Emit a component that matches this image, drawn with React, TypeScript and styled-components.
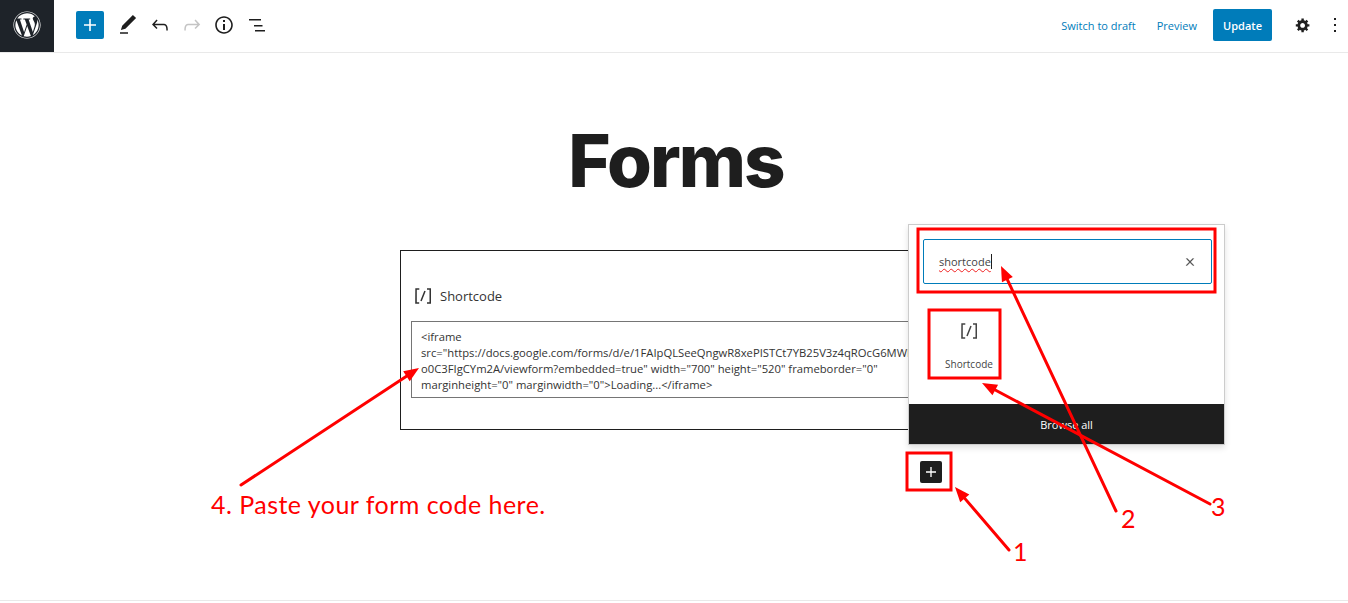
import React from "react";
import styled, { createGlobalStyle } from "styled-components";
import { FaWordpress } from "react-icons/fa";

const Global = createGlobalStyle`
  html, body { margin: 0; padding: 0; background: #fff; }
  body { font-family: "Open Sans", "Noto Sans", sans-serif; color: #1e1e1e; overflow: hidden; }
  * { box-sizing: border-box; }
`;

const Page = styled.div`
  position: relative;
  width: 1348px;
  height: 603px;
  display: flex;
  flex-direction: column;
  overflow: hidden;
`;

const TopBar = styled.header`
  height: 53px;
  flex: none;
  display: flex;
  align-items: center;
  padding-bottom: 2px;
  border-bottom: 1px solid #e9e9e9;
`;

const LogoTile = styled.div`
  width: 54px;
  height: 52px;
  align-self: flex-start;
  padding-bottom: 2px;
  background: #1e2329;
  color: #fff;
  display: flex;
  align-items: center;
  justify-content: center;
`;

const LeftTools = styled.div`
  display: flex;
  align-items: center;
  margin-left: 22px;
`;

const AddButton = styled.button`
  width: 28px;
  height: 28px;
  padding: 0;
  margin-right: 8px;
  border: 0;
  border-radius: 2px;
  background: #007cba;
  color: #fff;
  display: flex;
  align-items: center;
  justify-content: center;
`;

const ToolIcon = styled.span<{ $muted?: boolean; $wide?: boolean }>`
  width: ${(p) => (p.$wide ? 33 : 32)}px;
  height: 28px;
  display: flex;
  align-items: center;
  justify-content: ${(p) => (p.$wide ? "flex-start" : "center")};
  padding-left: ${(p) => (p.$wide ? 4 : 0)}px;
  color: ${(p) => (p.$muted ? "#c4c4c4" : "#1e1e1e")};
`;

const RightTools = styled.div`
  margin-left: auto;
  display: flex;
  align-items: center;
`;

const LinkText = styled.a<{ $gap: number }>`
  font-size: 11px;
  color: #007cba;
  margin-right: ${(p) => p.$gap}px;
`;

const UpdateButton = styled.button`
  width: 59px;
  height: 32px;
  padding: 0;
  border: 0;
  border-radius: 2px;
  background: #007cba;
  color: #fff;
  font: 600 11px "Open Sans", sans-serif;
  margin-right: 19px;
`;

const GearSlot = styled.span`
  width: 24px;
  height: 24px;
  display: flex;
  align-items: center;
  justify-content: center;
  margin-right: 8px;
`;

const MoreSlot = styled.span`
  width: 24px;
  height: 24px;
  margin-right: 1px;
  display: flex;
  align-items: center;
  justify-content: center;
`;

const Canvas = styled.main`
  flex: 1;
  display: flex;
  flex-direction: column;
  align-items: center;
  padding-left: 4px;
`;

const Title = styled.h1`
  margin: 68px 0 0;
  height: 129px;
  font: 800 72.5px/80px Inter, sans-serif;
  letter-spacing: -1.9px;
  color: #1e1e1e;
`;

const BlockWrap = styled.div`
  position: relative;
  width: 552px;
`;

const ShortcodeBlock = styled.section`
  height: 180px;
  border: 1px solid #1e1e1e;
  padding: 33px 10px 0;
`;

const BlockLabel = styled.div`
  height: 24px;
  display: flex;
  align-items: center;
  gap: 5px;
  font-size: 13px;
  color: #333;
  margin-bottom: 13px;
`;

const CodeBox = styled.div`
  height: 77px;
  border: 1px solid #757575;
  padding: 7px 9px;
  font-size: 11.25px;
  line-height: 16px;
  color: #333;
  white-space: pre;
  overflow: hidden;
`;

const AppenderRow = styled.div`
  display: flex;
  justify-content: flex-end;
  padding: 31px 10px 0 0;
`;

const Appender = styled.button`
  width: 22px;
  height: 22px;
  padding: 0;
  border: 0;
  border-radius: 2px;
  background: #1e1e1e;
  color: #fff;
  display: flex;
  align-items: center;
  justify-content: center;
`;

const Inserter = styled.div`
  position: absolute;
  left: 508px;
  top: -26px;
  width: 317px;
  height: 221px;
  background: #fff;
  border: 1px solid #ccc;
  box-shadow: 0 3px 6px rgba(0, 0, 0, 0.12);
  display: flex;
  flex-direction: column;
`;

const SearchField = styled.div`
  margin: 14px 12px 0 14px;
  height: 45px;
  flex: none;
  border: 1px solid #007cba;
  border-radius: 2px;
  display: flex;
  align-items: center;
  padding: 0 15px 0 15px;
  font-size: 11px;
  color: #444;
`;

const Misspelled = styled.span`
  text-decoration: underline wavy #f02020 1px;
  text-underline-offset: 2px;
`;

const Caret = styled.span`
  width: 1px;
  height: 15px;
  background: #1e1e1e;
`;

const ClearSlot = styled.span`
  margin-left: auto;
  display: flex;
  svg {
    stroke: currentColor;
    stroke-width: 1;
  }
`;

const ResultTile = styled.div`
  margin: 35px 0 0 20px;
  width: 80px;
  flex: 1;
  display: flex;
  flex-direction: column;
  align-items: center;
  font-size: 10px;
  color: #444;
`;

const TileLabel = styled.span`
  margin-top: 14px;
`;

const BrowseAll = styled.div`
  height: 40px;
  flex: none;
  background: #1e1e1e;
  color: #fff;
  display: flex;
  align-items: center;
  justify-content: center;
  font-size: 11px;
  font-weight: 500;
`;

const FooterRule = styled.div`
  height: 3px;
  flex: none;
  border-top: 1px solid #e9e9e9;
`;

const Overlay = styled.svg`
  position: absolute;
  inset: 0;
  pointer-events: none;
`;

const Note = styled.span<{ $x: number; $y: number; $wide?: boolean }>`
  position: absolute;
  left: ${(p) => p.$x}px;
  top: ${(p) => p.$y}px;
  font: 400 25px/30px Lato, sans-serif;
  letter-spacing: ${(p) => (p.$wide ? 0.47 : 0)}px;
  color: #f00;
  white-space: nowrap;
`;

type IconProps = { d: string; size?: number; box?: number };
const Glyph = ({ d, size = 24, box = 24 }: IconProps) => (
  <svg width={size} height={size} viewBox={`0 0 ${box} ${box}`} fill="currentColor" aria-hidden>
    <path d={d} />
  </svg>
);

const P = {
  plus: "M18 11.2h-5.2V6h-1.6v5.2H6v1.6h5.2V18h1.6v-5.2H18z",
  pencil: "M20.1 5.1L16.9 2 6.2 12.7l-1.3 4.4 4.5-1.3L20.1 5.1zM4 20.8h8v-1.5H4v1.5z",
  undo: "M18.3 11.7c-.6-.6-1.4-.9-2.3-.9H6.7l2.9-3.3-1.1-1-4.5 5L8.5 16l1-1-2.7-2.7H16c.5 0 .9.2 1.3.5 1 1 1 3.4 1 4.5v.3h1.5v-.2c0-1.5 0-4.3-1.5-5.7z",
  redo: "M15.6 6.5l-1.1 1 2.9 3.3H8c-.9 0-1.7.3-2.3.9-1.4 1.5-1.4 4.2-1.4 5.6v.2h1.5v-.3c0-1.1 0-3.5 1-4.5.3-.3.7-.5 1.3-.5h9.2L14.5 15l1.1 1.1 4.6-4.6-4.6-5z",
  info: "M12 3.2c-4.8 0-8.8 3.9-8.8 8.8 0 4.8 3.9 8.8 8.8 8.8 4.8 0 8.8-3.9 8.8-8.8 0-4.8-4-8.8-8.8-8.8zm0 16c-4 0-7.2-3.3-7.2-7.2C4.8 8 8 4.8 12 4.8s7.2 3.3 7.2 7.2c0 4-3.2 7.2-7.2 7.2zM11 17h2v-6h-2v6zm0-8h2V7h-2v2z",
  list: "M4 6h12v1.5H4zM9 12h8.5v1.5H9zM10 17h10v1.5H10z",
  gear: "M18 12h-2.18c-.17.7-.44 1.35-.81 1.93l1.54 1.54-2.1 2.1-1.54-1.54c-.58.36-1.23.63-1.91.79V19H8v-2.18c-.68-.16-1.33-.43-1.91-.79l-1.54 1.54-2.12-2.12 1.54-1.54c-.36-.58-.63-1.23-.79-1.91H1V9.03h2.17c.16-.7.44-1.35.8-1.94L2.43 5.55l2.1-2.1 1.54 1.54c.58-.37 1.24-.64 1.93-.81V2h3v2.18c.68.16 1.33.43 1.91.79l1.54-1.54 2.12 2.12-1.54 1.54c.36.59.64 1.24.8 1.94H18V12zm-8.5 1.5c1.66 0 3-1.34 3-3s-1.34-3-3-3-3 1.34-3 3 1.34 3 3 3z",
  more: "M13 19h-2v-2h2v2zm0-6h-2v-2h2v2zm0-6h-2V5h2v2z",
  shortcode: "M16 4.2v1.5h2.5v12.5H16v1.5h4V4.2h-4zM4.2 19.8h4v-1.5H5.8V5.8h2.5V4.2h-4l-.1 15.6zm5.1-3.1l1.4.6 4-10-1.4-.6-4 10z",
  close: "M13 11.8l6.1-6.3-1-1-6.1 6.2-6.1-6.2-1 1 6.1 6.3-6.5 6.7 1 1 6.5-6.6 6.5 6.6 1-1z",
};

const arrows = [
  { x1: 241, y1: 485, x2: 419, y2: 368 },
  { x1: 1116, y1: 511, x2: 1001, y2: 266 },
  { x1: 1210, y1: 504, x2: 982, y2: 383 },
  { x1: 1009, y1: 550, x2: 955, y2: 487 },
];

const boxes = [
  { x: 918, y: 229, w: 297, h: 63 },
  { x: 929, y: 310, w: 71, h: 68 },
  { x: 907, y: 453, w: 44, h: 37 },
];

const code = `<iframe
src="https://docs.google.com/forms/d/e/1FAIpQLSeeQngwR8xePISTCt7YB25V3z4qROcG6MWRxx
o0C3FIgCYm2A/viewform?embedded=true" width="700" height="520" frameborder="0"
marginheight="0" marginwidth="0">Loading...</iframe>`;

export default function App() {
  return (
    <Page>
      <Global />
      <TopBar>
        <LogoTile>
          <FaWordpress size={28} />
        </LogoTile>
        <LeftTools>
          <AddButton>
            <Glyph d={P.plus} />
          </AddButton>
          <ToolIcon><Glyph d={P.pencil} /></ToolIcon>
          <ToolIcon><Glyph d={P.undo} /></ToolIcon>
          <ToolIcon $muted><Glyph d={P.redo} /></ToolIcon>
          <ToolIcon $wide><Glyph d={P.info} /></ToolIcon>
          <ToolIcon $wide><Glyph d={P.list} /></ToolIcon>
        </LeftTools>
        <RightTools>
          <LinkText $gap={21}>Switch to draft</LinkText>
          <LinkText $gap={16}>Preview</LinkText>
          <UpdateButton>Update</UpdateButton>
          <GearSlot><Glyph d={P.gear} size={16} box={20} /></GearSlot>
          <MoreSlot><Glyph d={P.more} /></MoreSlot>
        </RightTools>
      </TopBar>
      <Canvas>
        <Title>Forms</Title>
        <BlockWrap>
          <ShortcodeBlock>
            <BlockLabel>
              <Glyph d={P.shortcode} />
              Shortcode
            </BlockLabel>
            <CodeBox>{code}</CodeBox>
          </ShortcodeBlock>
          <AppenderRow>
            <Appender><Glyph d={P.plus} size={20} /></Appender>
          </AppenderRow>
          <Inserter>
            <SearchField>
              <Misspelled>shortcode</Misspelled>
              <Caret />
              <ClearSlot><Glyph d={P.close} size={12} /></ClearSlot>
            </SearchField>
            <ResultTile>
              <Glyph d={P.shortcode} />
              <TileLabel>Shortcode</TileLabel>
            </ResultTile>
            <BrowseAll>Browse all</BrowseAll>
          </Inserter>
        </BlockWrap>
      </Canvas>
      <FooterRule />
      <Overlay width={1348} height={603} viewBox="0 0 1348 603">
        {boxes.map((b) => (
          <rect key={b.x} x={b.x} y={b.y} width={b.w} height={b.h} fill="none" stroke="#f00" strokeWidth={3} />
        ))}
        {arrows.map((a) => {
          const ang = Math.atan2(a.y2 - a.y1, a.x2 - a.x1);
          const L = 15;
          const W = 6;
          const bx = a.x2 - L * Math.cos(ang);
          const by = a.y2 - L * Math.sin(ang);
          const nx = -Math.sin(ang) * W;
          const ny = Math.cos(ang) * W;
          return (
            <g key={a.x1}>
              <line x1={a.x1} y1={a.y1} x2={bx} y2={by} stroke="#f00" strokeWidth={3} strokeLinecap="round" />
              <polygon points={`${a.x2},${a.y2} ${bx + nx},${by + ny} ${bx - nx},${by - ny}`} fill="#f00" />
            </g>
          );
        })}
      </Overlay>
      <Note $x={211} $y={489} $wide>4. Paste your form code here.</Note>
      <Note $x={1013} $y={536}>1</Note>
      <Note $x={1121} $y={503}>2</Note>
      <Note $x={1211} $y={491}>3</Note>
    </Page>
  );
}
